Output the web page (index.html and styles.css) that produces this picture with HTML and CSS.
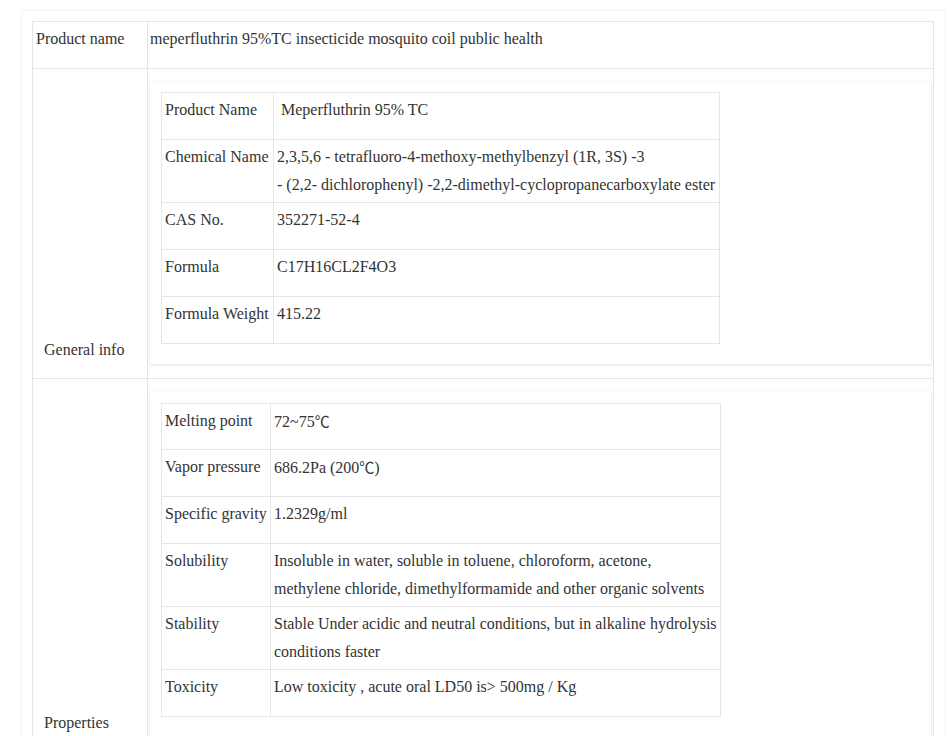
FILE: index.html
```html
<!DOCTYPE html>
<html lang="en">
<head>
<meta charset="utf-8">
<title>Meperfluthrin 95%TC</title>
<link rel="stylesheet" href="styles.css">
</head>
<body>
<div class="page">
  <table class="outer">
    <colgroup><col class="outer-label-col"><col></colgroup>
    <tr class="outer-row-first">
      <td class="outer-label">Product name</td>
      <td class="outer-value">meperfluthrin 95%TC insecticide mosquito coil public health</td>
    </tr>
    <tr>
      <td class="outer-label outer-label-bottom">General info</td>
      <td class="outer-value">
        <div class="card">
          <table class="inner inner-general">
            <colgroup><col class="general-key"><col></colgroup>
            <tr><td>Product Name</td><td>&nbsp;Meperfluthrin 95% TC</td></tr>
            <tr><td>Chemical Name</td><td>2,3,5,6 - tetrafluoro-4-methoxy-methylbenzyl (1R, 3S) -3<br>- (2,2- dichlorophenyl) -2,2-dimethyl-cyclopropanecarboxylate ester</td></tr>
            <tr><td>CAS No.</td><td>352271-52-4</td></tr>
            <tr><td>Formula</td><td>C17H16CL2F4O3</td></tr>
            <tr><td>Formula Weight</td><td>415.22</td></tr>
          </table>
        </div>
      </td>
    </tr>
    <tr>
      <td class="outer-label outer-label-bottom">Properties</td>
      <td class="outer-value">
        <div class="card card-props">
          <table class="inner inner-props">
            <colgroup><col class="props-key"><col></colgroup>
            <tr class="props-first"><td>Melting point</td><td>72~75<span class="unit">℃</span></td></tr>
            <tr><td>Vapor pressure</td><td>686.2Pa (200<span class="unit">℃</span>)</td></tr>
            <tr><td>Specific gravity</td><td>1.2329g/ml</td></tr>
            <tr><td>Solubility</td><td>Insoluble in water, soluble in toluene, chloroform, acetone,<br>methylene chloride, dimethylformamide and other organic solvents</td></tr>
            <tr><td>Stability</td><td>Stable Under acidic and neutral conditions, but in alkaline hydrolysis<br>conditions faster</td></tr>
            <tr><td>Toxicity</td><td>Low toxicity , acute oral LD50 is&gt; 500mg / Kg</td></tr>
          </table>
        </div>
      </td>
    </tr>
  </table>
</div>
</body>
</html>
```
FILE: styles.css
```css
html, body {
  margin: 0;
  padding: 0;
  background: #fff;
}
body {
  font-family: "Liberation Serif", "Times New Roman", serif;
  font-size: 16px;
  line-height: 28px;
  color: #333;
}
.page {
  margin: 11px 0 0 22px;
  width: 902px;
  padding: 10px;
  box-shadow: 0 0 3px rgba(0, 0, 0, 0.09);
}
table {
  border-collapse: collapse;
  table-layout: fixed;
}
td {
  border: 1px solid #e6e6e6;
  vertical-align: top;
  padding: 3px;
}
.outer {
  width: 902px;
}
.outer-label-col {
  width: 115px;
}
.outer-row-first td {
  height: 40px;
}
.outer-value {
  padding: 3px 2px;
}
.outer-label-bottom {
  vertical-align: bottom;
  padding: 0 3px 14px 11px;
}
.card {
  margin: 9px 0 11px;
  padding: 11px 11px 20px;
  background: #fff;
  box-shadow: 0 1px 3px rgba(0, 0, 0, 0.13);
}
.card-props {
  margin-top: 10px;
}
.inner td {
  height: 40px;
  white-space: nowrap;
}
.inner .props-first td {
  height: 39px;
}
.inner-general {
  width: 559px;
}
.general-key {
  width: 112px;
}
.inner-props {
  width: 560px;
}
.props-key {
  width: 109px;
}
.unit {
  font-family: "Noto Sans CJK SC", sans-serif;
  font-size: 15px;
}
```
